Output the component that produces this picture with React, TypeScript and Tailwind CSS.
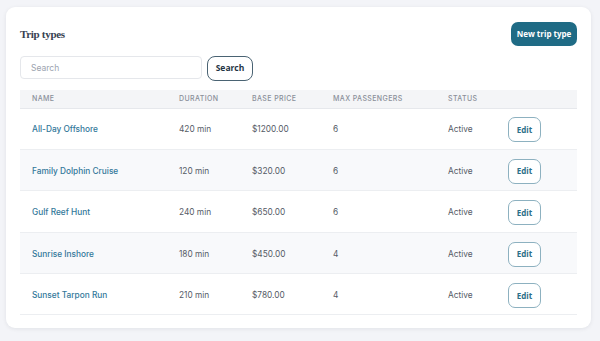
import React from 'react';

const trips = [
    { name: 'All-Day Offshore', duration: '420 min', price: '$1200.00', max: '6', status: 'Active' },
    { name: 'Family Dolphin Cruise', duration: '120 min', price: '$320.00', max: '6', status: 'Active' },
    { name: 'Gulf Reef Hunt', duration: '240 min', price: '$650.00', max: '6', status: 'Active' },
    { name: 'Sunrise Inshore', duration: '180 min', price: '$450.00', max: '4', status: 'Active' },
    { name: 'Sunset Tarpon Run', duration: '210 min', price: '$780.00', max: '4', status: 'Active' },
];

const App = () => {
    return (
        <div className="min-h-screen bg-[#f3f4f8] px-[6px] pt-[7px] pb-[13px] font-['Inter',sans-serif]">
            <div className="bg-white rounded-[9px] shadow-[0_1px_4px_rgba(15,23,42,0.08)] px-[14px] pt-[15px] pb-[13px] mr-[3px]">
                {/* Header */}
                <div className="flex items-center justify-between h-[24px]">
                    <h1 className="font-['Liberation_Serif',serif] font-bold text-[11px] text-[#374151] tracking-[-0.3px] mt-[1px]">Trip types</h1>
                    <button className="h-[24px] w-[66px] rounded-[7px] bg-[#1f6b85] text-white text-[8px] font-bold font-['Open_Sans',sans-serif]">
                        New trip type
                    </button>
                </div>

                {/* Search */}
                <div className="flex items-start gap-[5px] mt-[10px]">
                    <input
                        placeholder="Search"
                        className="w-[182px] h-[23px] rounded-[4px] border border-[#e5e7eb] px-[10px] text-[8.5px] text-[#374151] placeholder:text-[#9ca3af] outline-none"
                    />
                    <button className="h-[25px] w-[46px] rounded-[8px] border border-[#4a6373] text-[8.5px] font-bold text-[#1f3444] font-['Open_Sans',sans-serif]">
                        Search
                    </button>
                </div>

                {/* Table */}
                <table className="w-full table-fixed mt-[9px] border-collapse">
                    <thead>
                        <tr className="bg-[#f4f5f7] border-b border-[#e6e8ec] h-[18px]">
                            <th className="w-[147px] pl-[12px] text-left text-[7px] font-medium tracking-[0.4px] text-[#8a8f99]">NAME</th>
                            <th className="w-[73px] pl-[12px] text-left text-[7px] font-medium tracking-[0.4px] text-[#8a8f99]">DURATION</th>
                            <th className="w-[81px] pl-[12px] text-left text-[7px] font-medium tracking-[0.4px] text-[#8a8f99]">BASE PRICE</th>
                            <th className="w-[115px] pl-[12px] text-left text-[7px] font-medium tracking-[0.4px] text-[#8a8f99]">MAX PASSENGERS</th>
                            <th className="w-[60px] pl-[12px] text-left text-[7px] font-medium tracking-[0.4px] text-[#8a8f99]">STATUS</th>
                            <th className="pl-[12px]"></th>
                        </tr>
                    </thead>
                    <tbody>
                        {trips.map((t, i) => (
                            <tr key={t.name} className={`h-[41.4px] border-b border-[#eceef1] ${i % 2 === 1 ? 'bg-[#f8f9fb]' : 'bg-white'}`}>
                                <td className="pl-[12px] pt-[2px] text-[8.3px] font-medium text-[#33789a]">{t.name}</td>
                                <td className="pl-[12px] pt-[2px] text-[8.3px] text-[#555b66]">{t.duration}</td>
                                <td className="pl-[12px] pt-[2px] text-[8.3px] text-[#555b66]">{t.price}</td>
                                <td className="pl-[12px] pt-[2px] text-[8.3px] text-[#555b66]">{t.max}</td>
                                <td className="pl-[12px] pt-[2px] text-[8.3px] text-[#555b66]">{t.status}</td>
                                <td className="pl-[12px]">
                                    <button className="h-[25px] w-[33px] rounded-[7px] border border-[#8db1c0] text-[8px] font-bold text-[#2b6f88] font-['Open_Sans',sans-serif] bg-white">
                                        Edit
                                    </button>
                                </td>
                            </tr>
                        ))}
                    </tbody>
                </table>
            </div>
        </div>
    );
};

export default App;
